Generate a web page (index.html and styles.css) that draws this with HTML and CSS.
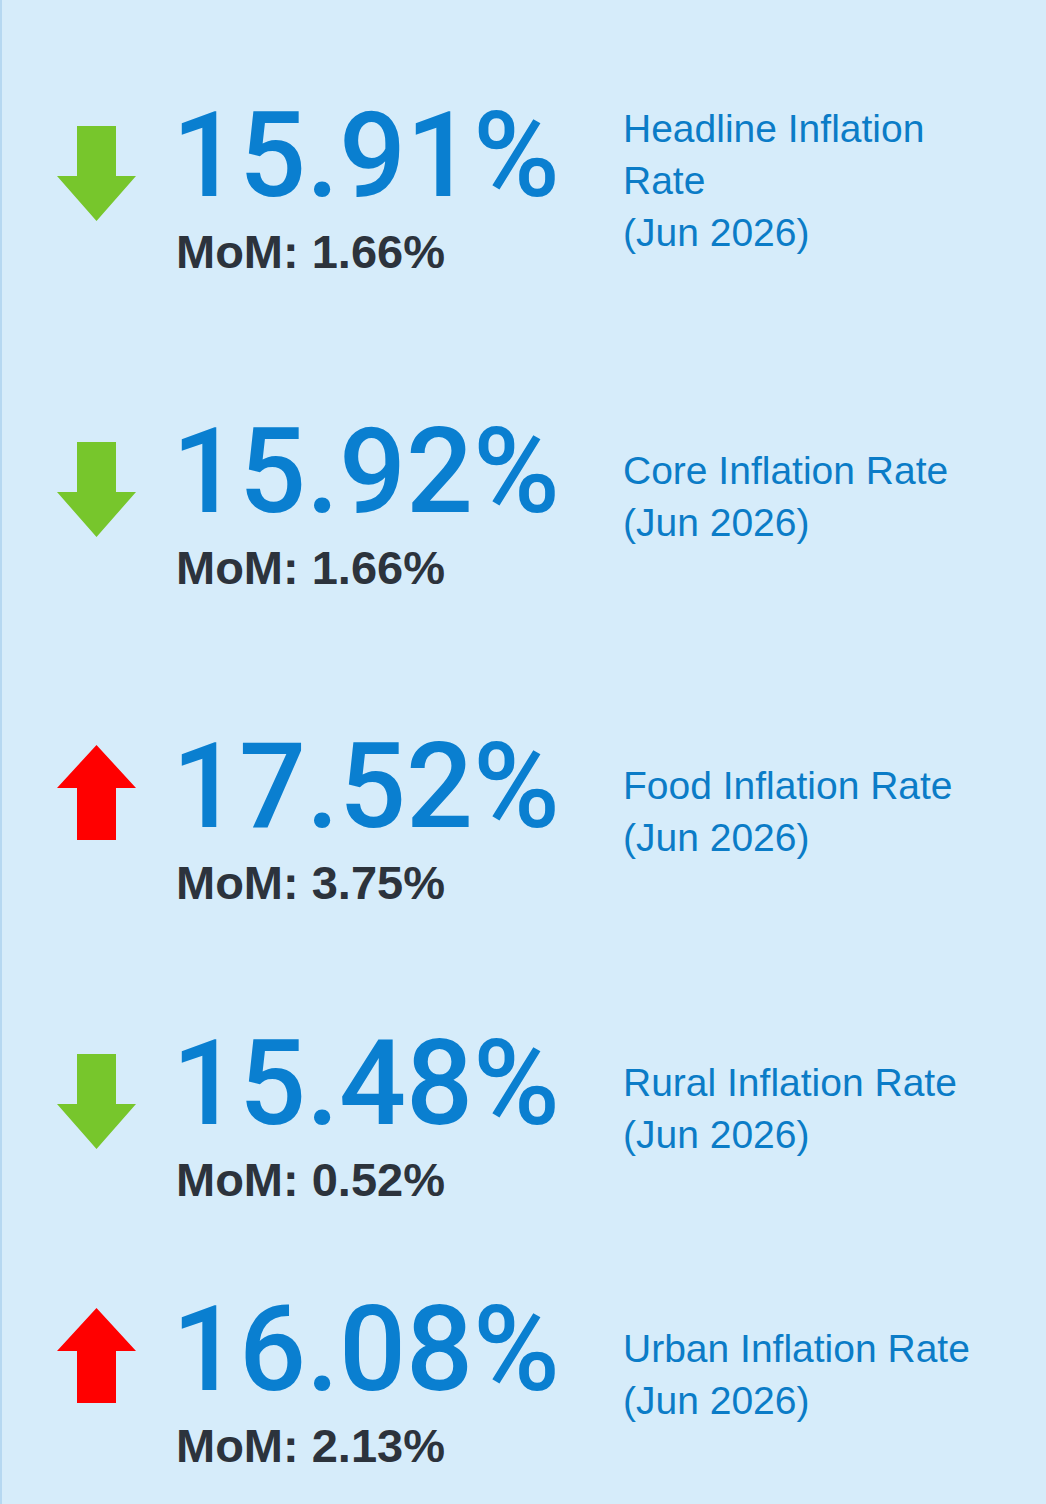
FILE: index.html
```html
<!DOCTYPE html>
<html lang="en">
<head>
<meta charset="utf-8">
<title>Inflation Rates</title>
<link rel="stylesheet" href="styles.css">
</head>
<body>
<main class="panel">
  <section class="row">
    <svg class="arrow down" viewBox="0 0 80 96" width="80" height="96" aria-hidden="true"><polygon points="20,0 59,0 59,50 79,50 39.5,95 0,50 20,50"/></svg>
    <div class="figures">
      <div class="value">15.91%</div>
      <div class="mom">MoM: 1.66%</div>
    </div>
    <div class="label">Headline Inflation Rate<br>(Jun 2026)</div>
  </section>
  <section class="row">
    <svg class="arrow down" viewBox="0 0 80 96" width="80" height="96" aria-hidden="true"><polygon points="20,0 59,0 59,50 79,50 39.5,95 0,50 20,50"/></svg>
    <div class="figures">
      <div class="value">15.92%</div>
      <div class="mom">MoM: 1.66%</div>
    </div>
    <div class="label">Core Inflation Rate<br>(Jun 2026)</div>
  </section>
  <section class="row">
    <svg class="arrow up" viewBox="0 0 80 96" width="80" height="96" aria-hidden="true"><polygon points="39.5,0 79,43 59,43 59,95 20,95 20,43 0,43"/></svg>
    <div class="figures">
      <div class="value">17.52%</div>
      <div class="mom">MoM: 3.75%</div>
    </div>
    <div class="label">Food Inflation Rate<br>(Jun 2026)</div>
  </section>
  <section class="row">
    <svg class="arrow down" viewBox="0 0 80 96" width="80" height="96" aria-hidden="true"><polygon points="20,0 59,0 59,50 79,50 39.5,95 0,50 20,50"/></svg>
    <div class="figures">
      <div class="value">15.48%</div>
      <div class="mom">MoM: 0.52%</div>
    </div>
    <div class="label">Rural Inflation Rate<br>(Jun 2026)</div>
  </section>
  <section class="row">
    <svg class="arrow up" viewBox="0 0 80 96" width="80" height="96" aria-hidden="true"><polygon points="39.5,0 79,43 59,43 59,95 20,95 20,43 0,43"/></svg>
    <div class="figures">
      <div class="value">16.08%</div>
      <div class="mom">MoM: 2.13%</div>
    </div>
    <div class="label">Urban Inflation Rate<br>(Jun 2026)</div>
  </section>
</main>
</body>
</html>
```

FILE: styles.css
```css
html, body {
  margin: 0;
  padding: 0;
  background: #d6ecfa;
}

.panel {
  box-sizing: border-box;
  min-height: 1504px;
  border-left: 2px solid #b6d8f1;
  padding: 96px 0 0 55px;
  display: flex;
  flex-direction: column;
}

.row {
  display: flex;
  align-items: flex-start;
}

.row:nth-child(2) { margin-top: 132px; }
.row:nth-child(3) { margin-top: 131px; }
.row:nth-child(4) { margin-top: 113px; }
.row:nth-child(5) { margin-top: 82px; }

.arrow {
  flex: none;
  display: block;
  margin-right: 35px;
}

.arrow.down {
  margin-top: 30px;
  fill: #77c62c;
}

.arrow.up {
  margin-top: 18px;
  fill: #ff0000;
}

.figures {
  flex: none;
  width: 416px;
  margin-right: 35px;
}

.value {
  font-family: Roboto, "Liberation Sans", sans-serif;
  font-weight: 500;
  font-size: 118px;
  line-height: 120px;
  color: #0a7fd0;
  white-space: nowrap;
}

.mom {
  margin-top: 8px;
  margin-left: 4px;
  font-family: "Liberation Sans", Arial, sans-serif;
  font-weight: 700;
  font-size: 47px;
  line-height: 56px;
  color: #2c333c;
  white-space: nowrap;
}

.label {
  align-self: center;
  margin-bottom: 14px;
  max-width: 370px;
  font-family: "Liberation Sans", Arial, sans-serif;
  font-size: 39px;
  line-height: 52px;
  color: #0b7cc7;
}
```
